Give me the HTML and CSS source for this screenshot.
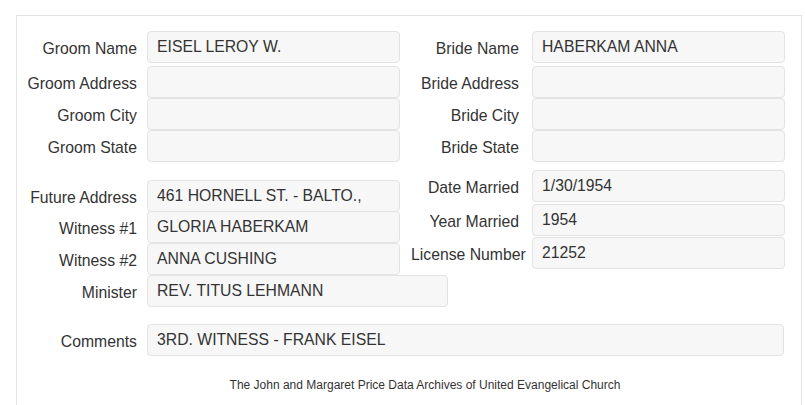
FILE: index.html
```html
<!DOCTYPE html>
<html lang="en">
<head>
    <meta charset="UTF-8">
    <title>Marriage Record</title>
    <link rel="stylesheet" href="styles.css">
</head>
<body>
    <div class="record">
        <div class="pair first">
            <div class="col left">
                <div class="field"><label>Groom Name</label><input type="text" value="EISEL LEROY W." readonly></div>
                <div class="field"><label>Groom Address</label><input type="text" value="" readonly></div>
                <div class="field"><label>Groom City</label><input type="text" value="" readonly></div>
                <div class="field"><label>Groom State</label><input type="text" value="" readonly></div>
            </div>
            <div class="col right">
                <div class="field"><label>Bride Name</label><input type="text" value="HABERKAM ANNA" readonly></div>
                <div class="field"><label>Bride Address</label><input type="text" value="" readonly></div>
                <div class="field"><label>Bride City</label><input type="text" value="" readonly></div>
                <div class="field"><label>Bride State</label><input type="text" value="" readonly></div>
            </div>
        </div>
        <div class="pair second">
            <div class="col left">
                <div class="field"><label>Future Address</label><input type="text" value="461 HORNELL ST. - BALTO.," readonly></div>
                <div class="field"><label>Witness #1</label><input type="text" value="GLORIA HABERKAM" readonly></div>
                <div class="field"><label>Witness #2</label><input type="text" value="ANNA CUSHING" readonly></div>
                <div class="field"><label>Minister</label><input type="text" class="wide" value="REV. TITUS LEHMANN" readonly></div>
            </div>
            <div class="col right">
                <div class="field"><label>Date Married</label><input type="text" value="1/30/1954" readonly></div>
                <div class="field"><label>Year Married</label><input type="text" value="1954" readonly></div>
                <div class="field"><label>License Number</label><input type="text" value="21252" readonly></div>
            </div>
        </div>
        <div class="field comments"><label>Comments</label><input type="text" value="3RD. WITNESS - FRANK EISEL" readonly></div>
        <p class="footer">The John and Margaret Price Data Archives of United Evangelical Church</p>
    </div>
</body>
</html>
```

FILE: styles.css
```css
body {
  margin: 0;
  padding: 15px 0 0 16px;
  font-family: "Liberation Sans", Arial, sans-serif;
  color: #333;
  background: #fff;
}
.record {
  width: 786px;
  box-sizing: border-box;
  border: 1px solid #e3e3e3;
  border-bottom: none;
  padding-top: 15px;
  height: 400px;
}
.pair {
  display: flex;
  align-items: flex-start;
}
.col {
  display: flex;
  flex-direction: column;
}
.left {
  width: 383px;
  flex-shrink: 0;
}
.field {
  display: flex;
  align-items: center;
}
.field label {
  width: 120px;
  flex-shrink: 0;
  text-align: right;
  font-size: 15.75px;
  white-space: nowrap;
  margin-right: 10px;
  padding-top: 3px;
}
.field input {
  width: 253px;
  height: 32px;
  flex-shrink: 0;
  box-sizing: border-box;
  margin: 0;
  padding: 0 9px;
  border: 1px solid #e3e3e3;
  border-radius: 4px;
  background: #f7f7f7;
  font-family: "Liberation Sans", Arial, sans-serif;
  font-size: 15.75px;
  color: #333;
  outline: none;
}
.field input.wide {
  width: 301px;
}
.right {
  margin-left: 11px;
}
.right label {
  width: 108px;
  margin-right: 13px;
}

/* first block: groom / bride */
.first .field:nth-child(2) {
  margin-top: 3px;
}

/* second block: left and right start at different heights */
.second .left {
  margin-top: 18px;
}
.second .left .field:first-child {
  margin-bottom: -1px;
}
.second .right {
  margin-top: 8px;
}
.second .right .field:first-child {
  margin-bottom: 2px;
}
.second .right .field:nth-child(2) {
  margin-bottom: 1px;
}

.comments {
  margin-top: 17px;
}
.comments input {
  width: 637px;
}
.footer {
  margin: 22px 0 0;
  padding-left: 32px;
  text-align: center;
  font-size: 12px;
}
```
